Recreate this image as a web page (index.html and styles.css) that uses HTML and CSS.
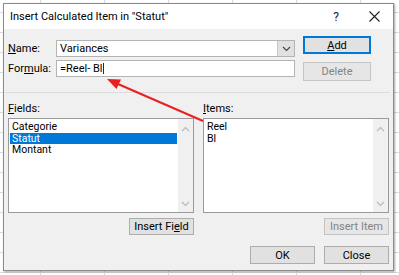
FILE: index.html
```html
<!DOCTYPE html>
<html lang="en">
<head>
<meta charset="UTF-8" />
<meta name="viewport" content="width=device-width, initial-scale=1" />
<title>Insert Calculated Item</title>
<link rel="stylesheet" href="styles.css">
</head>
<body>
<div class="dialog">
  <div class="titlebar">
    <span class="title">Insert Calculated Item in "Statut"</span>
    <span class="help">?</span>
    <svg class="close-x" width="11" height="11" viewBox="0 0 11 11"><path d="M0.5 0.5L10.5 10.5M10.5 0.5L0.5 10.5" stroke="#222" stroke-width="1.1"/></svg>
  </div>

  <div class="head">
    <div class="fields">
      <label class="lbl"><u>N</u>ame:</label>
      <div class="combo">
        <span class="txt">Variances</span>
        <span class="drop"><svg width="9" height="6" viewBox="0 0 9 6"><path d="M1 1L4.5 4.5L8 1" fill="none" stroke="#444" stroke-width="1.1"/></svg></span>
      </div>
      <label class="lbl">For<u>m</u>ula:</label>
      <div class="input"><span class="txt">=Reel- Bl</span><span class="caret"></span></div>
    </div>
    <div class="side">
      <button class="btn default"><u>A</u>dd</button>
      <button class="btn off">Delete</button>
    </div>
  </div>

  <div class="lists">
    <div class="col">
      <div class="lbl"><u>F</u>ields:</div>
      <div class="listbox">
        <ul>
          <li>Categorie</li>
          <li class="sel">Statut</li>
          <li>Montant</li>
        </ul>
        <div class="scroll">
          <svg width="9" height="6" viewBox="0 0 9 6"><path d="M1 5L4.5 1.5L8 5" fill="none" stroke="#b8b8b8" stroke-width="1.1"/></svg>
          <svg width="9" height="6" viewBox="0 0 9 6"><path d="M1 1L4.5 4.5L8 1" fill="none" stroke="#b8b8b8" stroke-width="1.1"/></svg>
        </div>
      </div>
      <button class="btn small">Insert Fi<u>e</u>ld</button>
    </div>
    <div class="col">
      <div class="lbl"><u>I</u>tems:</div>
      <div class="listbox">
        <ul>
          <li>Reel</li>
          <li>Bl</li>
        </ul>
        <div class="scroll">
          <svg width="9" height="6" viewBox="0 0 9 6"><path d="M1 5L4.5 1.5L8 5" fill="none" stroke="#b8b8b8" stroke-width="1.1"/></svg>
          <svg width="9" height="6" viewBox="0 0 9 6"><path d="M1 1L4.5 4.5L8 1" fill="none" stroke="#b8b8b8" stroke-width="1.1"/></svg>
        </div>
      </div>
      <button class="btn small off">Insert Item</button>
    </div>
  </div>

  <div class="foot">
    <button class="btn">OK</button>
    <button class="btn">Close</button>
  </div>
</div>

<svg class="arrow" width="399" height="275" viewBox="0 0 399 275">
  <line x1="118" y1="84" x2="203" y2="121" stroke="#e8201f" stroke-width="2"/>
  <polygon points="107,79 121,79.6 116.5,89" fill="#e8201f"/>
</svg>
</body>
</html>
```

FILE: styles.css
```css
body { margin: 0; width: 399px; height: 275px; overflow: hidden; position: relative; font-family: Roboto, "Noto Sans", sans-serif; font-size: 11px; color: #000;
  background-color: #fff;
  background-image: linear-gradient(#dadada 1px, transparent 1px), linear-gradient(90deg, #dadada 1px, transparent 1px);
  background-size: 64px 20px; background-position: 40px 12px; }

.dialog { margin: 3px 0 0 3px; width: 391px; height: 268px; box-sizing: border-box; border: 1px solid #8a8a8a; background: #f0f0f0; box-shadow: 1px 1px 2px rgba(0,0,0,0.35); display: flex; flex-direction: column; }

.titlebar { height: 25px; background: #fff; display: flex; align-items: center; padding-left: 6px; }
.title { font-size: 11px; flex: 1; }
.help { font-size: 12px; margin-right: 30px; color: #222; }
.close-x { margin-right: 13px; }

.head { height: 63px; display: flex; margin: 0 3px 0 1px; padding-left: 3px; border-bottom: 1px solid #dcdcdc; }
.fields { display: grid; grid-template-columns: 48px 239px; grid-auto-rows: 17px; row-gap: 3px; padding-top: 11px; align-items: center; }
.lbl { line-height: 12px; }
.combo, .input { height: 17px; box-sizing: border-box; border: 1px solid #b4b4b4; background: #fff; display: flex; align-items: center; padding-left: 3px; }
.txt { flex: 1; }
.drop { width: 16px; height: 15px; background: #e1e1e1; border-left: 1px solid #c8c8c8; display: flex; align-items: center; justify-content: center; }
.input .txt { flex: none; }
.caret { width: 1px; height: 11px; background: #1a2a5a; margin-left: 1px; }

.side { display: flex; flex-direction: column; gap: 8px; padding-top: 7px; margin-left: 8px; }

.btn { font: inherit; width: 68px; height: 18px; padding: 0; background: #e1e1e1; border: 1px solid #adadad; color: #000; cursor: pointer; }
.btn.default { border: 2px solid #0078d7; }
.btn.off { color: #838383; border-color: #c4c4c4; background: #e6e6e6; }
.side .btn.off { height: 19px; }

.lists { display: flex; gap: 9px; padding: 10px 0 0 4px; }
.col { width: 186px; display: flex; flex-direction: column; }
.col .lbl { height: 12px; margin-bottom: 3px; }
.listbox { height: 95px; box-sizing: border-box; border: 1px solid #9a9a9a; background: #fff; display: flex; }
.listbox ul { flex: 1; margin: 0; padding: 2px 1px 0 1px; list-style: none; font-size: 10.5px; }
.listbox li { line-height: 11.5px; padding-left: 2px; }
.listbox li.sel { background: #0078d7; color: #fff; }
.scroll { width: 15px; background: #f0f0f0; display: flex; flex-direction: column; justify-content: space-between; align-items: center; padding: 7px 0 5px; }
.btn.small { width: 65px; height: 17px; margin-top: 5px; align-self: flex-end; }

.foot { display: flex; justify-content: flex-end; gap: 9px; padding: 11px 4px 0 0; }
.foot .btn { width: 65px; }

.arrow { position: absolute; left: 0; top: 0; pointer-events: none; }
```
